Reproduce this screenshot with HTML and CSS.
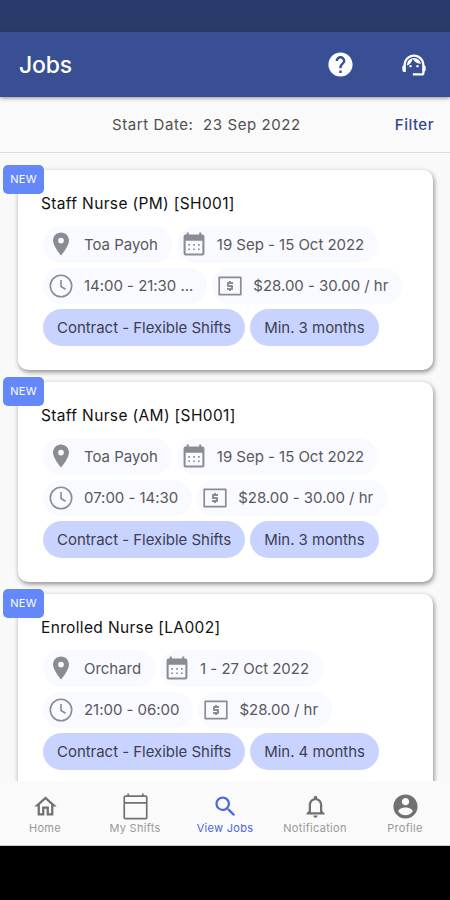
FILE: index.html
```html
<!DOCTYPE html>
<html lang="en">
<head>
<meta charset="utf-8">
<title>Jobs</title>
<link rel="stylesheet" href="styles.css">
</head>
<body>
<svg class="defs" width="0" height="0" aria-hidden="true">
  <symbol id="pin" viewBox="1.500 1.500 21 21"><path d="M12 2C8.130 2 5 5.130 5 9c0 5.250 7 13 7 13s7-7.750 7-13c0-3.870-3.130-7-7-7zm0 9.500a2.500 2.500 0 0 1 0-5 2.500 2.500 0 0 1 0 5z"/></symbol>
  <symbol id="cal" viewBox="1.500 0.500 21 23"><path fill-rule="evenodd" d="M5 3V1h2v2h10V1h2v2h1a2 2 0 0 1 2 2v16a2 2 0 0 1-2 2H4a2 2 0 0 1-2-2V5a2 2 0 0 1 2-2zM4 9v12h16V9z"/><path d="M6.500 12h1.600v1.600H6.500zm4.700 0h1.600v1.600h-1.600zm4.700 0h1.600v1.600h-1.600zm-9.400 4.200h1.600v1.600H6.500zm4.700 0h1.600v1.600h-1.600zm4.700 0h1.600v1.600h-1.600z"/></symbol>
  <symbol id="clock" viewBox="0 0 24 24"><g fill="none" stroke="currentColor" stroke-width="1.600"><circle cx="12" cy="12" r="10.700"/><path d="M12 6v6.500l4.500 2.700"/></g></symbol>
  <symbol id="cash" viewBox="0 0 24 24"><path fill="none" stroke="currentColor" stroke-width="1.700" stroke-linejoin="round" d="M1.200 3.400h21.600v17.200H1.200z"/><path d="M11 17h2v-1h1c.55 0 1-.45 1-1v-3c0-.55-.45-1-1-1h-3v-1h4V8h-2V7h-2v1h-1c-.55 0-1 .45-1 1v3c0 .55.45 1 1 1h3v1H9v2h2v1z"/></symbol>
</svg>
<div class="status"></div>
<header class="appbar">
  <h1>Jobs</h1>
  <svg class="help" viewBox="0 0 24 24"><path d="M12 2C6.480 2 2 6.480 2 12s4.480 10 10 10 10-4.480 10-10S17.520 2 12 2zm1 17h-2v-2h2v2zm2.070-7.750-.9.920C13.450 12.900 13 13.500 13 15h-2v-.5c0-1.100.45-2.100 1.170-2.830l1.240-1.260c.37-.36.59-.86.59-1.410 0-1.100-.9-2-2-2s-2 .9-2 2H8c0-2.210 1.790-4 4-4s4 1.790 4 4c0 .88-.36 1.680-.93 2.250z"/></svg>
  <svg class="agent" viewBox="0 0 24 24"><path d="M21 12.220C21 6.730 16.740 3 12 3c-4.690 0-9 3.650-9 9.280-.6.340-1 .98-1 1.720v2c0 1.100.9 2 2 2h1v-6.100c0-3.870 3.130-7 7-7s7 3.130 7 7V19h-8v2h8c1.100 0 2-.9 2-2v-1.220c.59-.31 1-.92 1-1.640v-2.300c0-.7-.41-1.310-1-1.620z"/><circle cx="9" cy="13" r="1"/><circle cx="15" cy="13" r="1"/><path d="M18 11.030A6.040 6.040 0 0 0 12.050 6c-3.030 0-6.290 2.510-6.030 6.450a8.075 8.075 0 0 0 4.860-5.890c1.310 2.630 4 4.440 7.120 4.470z"/></svg>
</header>
<div class="filterbar"><span class="date">Start Date:&nbsp; 23 Sep 2022</span><span class="filter">Filter</span></div>
<main class="list">
  <article class="card">
    <span class="badge">NEW</span>
    <h2>Staff Nurse (PM) [SH001]</h2>
    <div class="row"><span class="chip"><svg><use href="#pin"/></svg>Toa Payoh</span><span class="chip"><svg class="cal"><use href="#cal"/></svg>19 Sep - 15 Oct 2022</span></div>
    <div class="row"><span class="chip"><svg><use href="#clock"/></svg>14:00 - 21:30 ...</span><span class="chip"><svg><use href="#cash"/></svg>$28.00 - 30.00 / hr</span></div>
    <div class="row"><span class="chip tag">Contract - Flexible Shifts</span><span class="chip tag">Min. 3 months</span></div>
  </article>
  <article class="card">
    <span class="badge">NEW</span>
    <h2>Staff Nurse (AM) [SH001]</h2>
    <div class="row"><span class="chip"><svg><use href="#pin"/></svg>Toa Payoh</span><span class="chip"><svg class="cal"><use href="#cal"/></svg>19 Sep - 15 Oct 2022</span></div>
    <div class="row"><span class="chip"><svg><use href="#clock"/></svg>07:00 - 14:30</span><span class="chip"><svg><use href="#cash"/></svg>$28.00 - 30.00 / hr</span></div>
    <div class="row"><span class="chip tag">Contract - Flexible Shifts</span><span class="chip tag">Min. 3 months</span></div>
  </article>
  <article class="card">
    <span class="badge">NEW</span>
    <h2>Enrolled Nurse [LA002]</h2>
    <div class="row"><span class="chip"><svg><use href="#pin"/></svg>Orchard</span><span class="chip"><svg class="cal"><use href="#cal"/></svg>1 - 27 Oct 2022</span></div>
    <div class="row"><span class="chip"><svg><use href="#clock"/></svg>21:00 - 06:00</span><span class="chip"><svg><use href="#cash"/></svg>$28.00 / hr</span></div>
    <div class="row"><span class="chip tag">Contract - Flexible Shifts</span><span class="chip tag">Min. 4 months</span></div>
  </article>
</main>
<nav class="tabs">
  <div class="tab"><svg viewBox="0 0 24 24"><path d="m12 5.690 5 4.500V18h-2v-6H9v6H7v-7.810l5-4.500M12 3 2 12h3v8h6v-6h2v6h6v-8h3L12 3z"/></svg><span>Home</span></div>
  <div class="tab"><svg viewBox="0 0 24 24"><path fill="none" stroke="currentColor" stroke-width="1.500" d="M3 2.800h18q1 0 1 1v18q0 1-1 1H3q-1 0-1-1v-18q0-1 1-1zM2 8.700h20M5.500 .4v2.400M18.500 .4v2.400"/></svg><span>My Shifts</span></div>
  <div class="tab active"><svg viewBox="0 0 24 24"><path d="M15.500 14h-.79l-.28-.27A6.471 6.471 0 0 0 16 9.500 6.500 6.500 0 1 0 9.500 16c1.610 0 3.090-.59 4.230-1.570l.27.28v.79l5 4.990L20.490 19l-4.990-5zm-6 0C7.010 14 5 11.990 5 9.500S7.010 5 9.500 5 14 7.010 14 9.500 11.990 14 9.500 14z"/></svg><span>View Jobs</span></div>
  <div class="tab"><svg viewBox="0 0 24 24"><path d="M12 22c1.100 0 2-.9 2-2h-4c0 1.100.9 2 2 2zm6-6v-5c0-3.070-1.630-5.640-4.500-6.320V4c0-.83-.67-1.500-1.500-1.500s-1.500.67-1.500 1.500v.68C7.640 5.360 6 7.920 6 11v5l-2 2v1h16v-1l-2-2zm-2 1H8v-6c0-2.480 1.510-4.500 4-4.500s4 2.020 4 4.500v6z"/></svg><span>Notification</span></div>
  <div class="tab"><svg class="big" viewBox="0 0 24 24"><path d="M12 2C6.480 2 2 6.480 2 12s4.480 10 10 10 10-4.480 10-10S17.520 2 12 2zm0 3c1.660 0 3 1.340 3 3s-1.340 3-3 3-3-1.340-3-3 1.340-3 3-3zm0 14.200a7.200 7.200 0 0 1-6-3.220c.03-1.990 4-3.080 6-3.080 1.990 0 5.970 1.090 6 3.080a7.200 7.200 0 0 1-6 3.220z"/></svg><span>Profile</span></div>
</nav>
</body>
</html>
```
FILE: styles.css
```css
* { box-sizing: border-box; }
body { margin: 0; width: 450px; height: 900px; overflow: hidden; background: #000; font-family: Inter, sans-serif; display: flex; flex-direction: column; }
svg { fill: currentColor; flex: none; display: block; }
.defs { position: absolute; }
.status { height: 32px; background: #2a3b6b; flex: none; }
.appbar { height: 65px; flex: none; background: #394f94; color: #fff; display: flex; align-items: center; padding: 0 22px 0 19px; position: relative; z-index: 3; box-shadow: 0 1px 4px rgba(20,40,40,.5); }
h1 { font-size: 23px; font-weight: 500; letter-spacing: -.2px; margin: 0 auto 0 0; }
.help { width: 29px; height: 29px; margin-right: 45px; }
.agent { width: 28px; height: 28px; }
.filterbar { height: 56px; flex: none; background: #fafafa; border-bottom: 1px solid #d9dbe6; display: flex; align-items: center; justify-content: space-between; padding: 0 16px 0 112px; font-size: 15px; letter-spacing: .58px; color: #505050; }
.filter { color: #35478f; font-weight: 500; letter-spacing: .5px; }
.list { height: 628px; flex: none; overflow: hidden; background: #f9f9fa; padding: 17px 17px 0 18px; display: flex; flex-direction: column; gap: 12px; }
.card { height: 200px; flex: none; position: relative; background: #fff; border-radius: 10px; padding: 22px 0 0 25px; box-shadow: 1px 2px 5px rgba(0,0,0,.45); display: flex; flex-direction: column; gap: 5px; }
.badge { position: absolute; left: -15px; top: -5.500px; width: 41px; height: 29.500px; border-radius: 5px; background: #6488fa; color: #fff; font-size: 11px; letter-spacing: .2px; display: flex; align-items: center; justify-content: center; }
h2 { margin: 1px 0 6px -2px; font-size: 15.500px; line-height: 22px; font-weight: 400; letter-spacing: .35px; color: #111; }
.row { display: flex; gap: 5px; }
.chip { height: 36.5px; border-radius: 19px; background: #f9faff; color: #58585c; display: flex; align-items: center; padding: 0 14px 0 6px; font-size: 15px; letter-spacing: -.03px; white-space: nowrap; }
.chip svg { width: 24px; height: 24px; margin-right: 11px; color: #8b8c91; }
.chip svg.cal { width: 22px; margin-right: 12px; }
.chip.tag { background: #c9d3ff; color: #3b3f50; padding: 0 14px; }
.tabs { height: 65px; flex: none; background: #fafafa; border-bottom: 1px solid #ccc; display: grid; grid-template-columns: repeat(5, 1fr); }
.tab { display: flex; flex-direction: column; align-items: center; padding-top: 12px; color: #717171; font-size: 11px; letter-spacing: .3px; }
.tab svg { width: 27px; height: 27px; }
.tab svg.big { width: 29px; height: 29px; margin: -1px; }
.tab span { margin-top: 1px; line-height: 14px; color: #999; }
.tab.active, .tab.active span { color: #4a67dc; }
```
